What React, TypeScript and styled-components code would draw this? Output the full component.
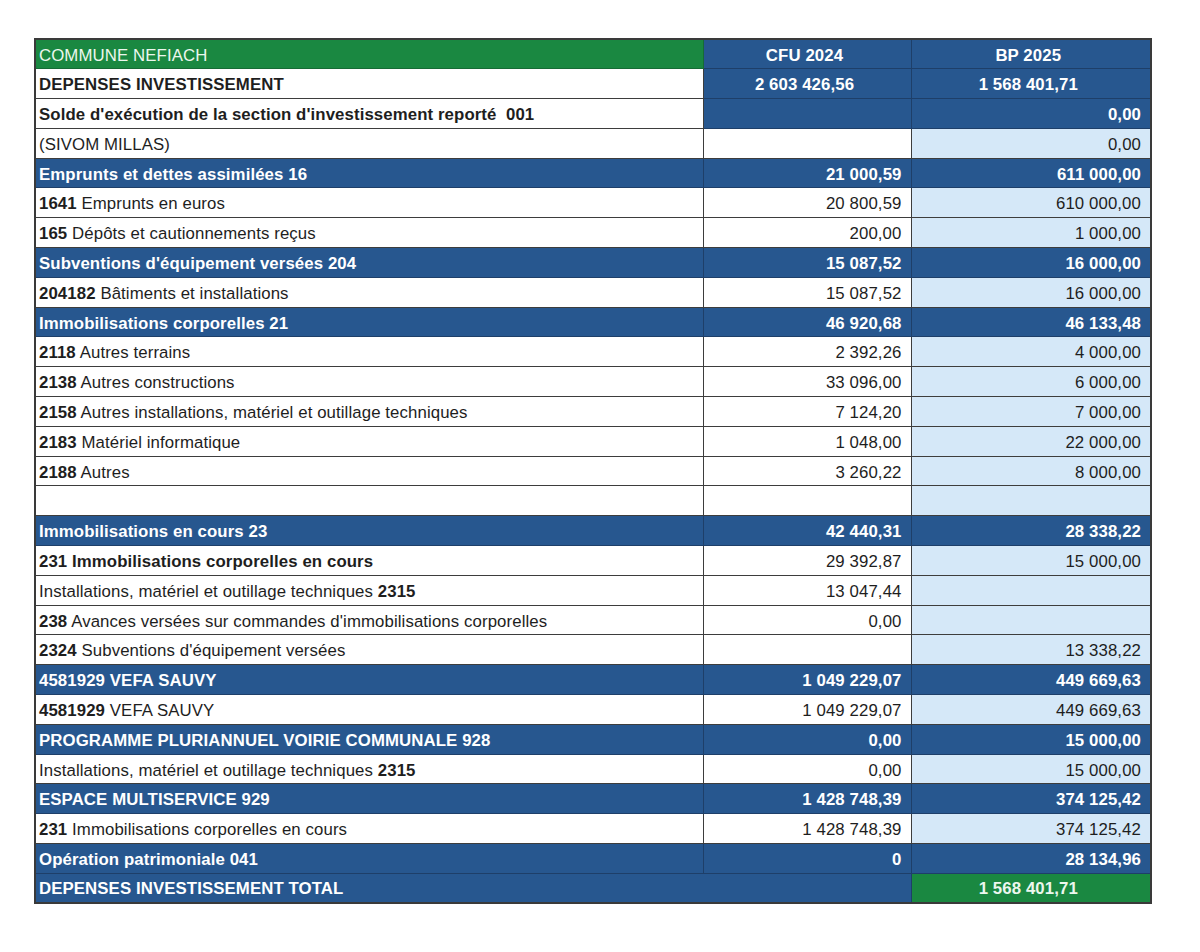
import React from "react";
import styled, { createGlobalStyle, css } from "styled-components";

const GlobalStyle = createGlobalStyle`
  html, body { margin: 0; padding: 0; background: #ffffff; }
  body { font-family: "Liberation Sans", Arial, sans-serif; }
`;

const BLUE = "#27578f";
const GREEN = "#1a8841";
const LIGHT = "#d5e8f8";

type Tone = "blue" | "green" | "white" | "light";

const Page = styled.div`
  padding: 38px 0 0 34px;
  width: 1200px;
  height: 952px;
  box-sizing: border-box;
`;

const Table = styled.table`
  border-collapse: collapse;
  table-layout: fixed;
  width: 1116px;
  border: 2px solid #3a3a3a;
  font-size: 16.8px;
  color: #1e1e1e;
`;

const Row = styled.tr`
  height: 29.8px;
`;

const toneStyles: Record<Tone, ReturnType<typeof css>> = {
  blue: css`
    background: ${BLUE};
    color: #ffffff;
    border-color: #1e3f69;
  `,
  green: css`
    background: ${GREEN};
    color: #ecf7ee;
    border-color: #166b35;
  `,
  white: css`
    background: #ffffff;
    color: #1e1e1e;
    border-color: #3d3d3d;
  `,
  light: css`
    background: ${LIGHT};
    color: #1e1e1e;
    border-color: #3d3d3d;
  `,
};

const Cell = styled.td<{ $tone: Tone; $align?: "left" | "right" | "center"; $bold?: boolean }>`
  ${(p) => toneStyles[p.$tone]}
  border-width: 1px;
  border-style: solid;
  padding: 3px 8px 0 3px;
  height: 29.8px;
  box-sizing: border-box;
  text-align: ${(p) => p.$align ?? "left"};
  font-weight: ${(p) => (p.$bold ? 700 : 400)};
  white-space: nowrap;
  overflow: hidden;
  line-height: 22px;
  vertical-align: middle;
  letter-spacing: 0.1px;
`;

const ValueCell = styled(Cell)`
  padding-right: 9px;
`;

const Code = styled.b`
  font-weight: 700;
`;

type Line =
  | { kind: "section"; label: string; cfu: string; bp: string }
  | { kind: "detail"; code?: string; text?: string; codeAfter?: boolean; allBold?: boolean; cfu: string; bp: string };

const lines: Line[] = [
  { kind: "section", label: "Emprunts et dettes assimilées 16", cfu: "21 000,59", bp: "611 000,00" },
  { kind: "detail", code: "1641", text: "Emprunts en euros", cfu: "20 800,59", bp: "610 000,00" },
  { kind: "detail", code: "165", text: "Dépôts et cautionnements reçus", cfu: "200,00", bp: "1 000,00" },
  { kind: "section", label: "Subventions d'équipement versées 204", cfu: "15 087,52", bp: "16 000,00" },
  { kind: "detail", code: "204182", text: "Bâtiments et installations", cfu: "15 087,52", bp: "16 000,00" },
  { kind: "section", label: "Immobilisations corporelles 21", cfu: "46 920,68", bp: "46 133,48" },
  { kind: "detail", code: "2118", text: "Autres terrains", cfu: "2 392,26", bp: "4 000,00" },
  { kind: "detail", code: "2138", text: "Autres constructions", cfu: "33 096,00", bp: "6 000,00" },
  { kind: "detail", code: "2158", text: "Autres installations, matériel et outillage techniques", cfu: "7 124,20", bp: "7 000,00" },
  { kind: "detail", code: "2183", text: "Matériel informatique", cfu: "1 048,00", bp: "22 000,00" },
  { kind: "detail", code: "2188", text: "Autres", cfu: "3 260,22", bp: "8 000,00" },
  { kind: "detail", cfu: "", bp: "" },
  { kind: "section", label: "Immobilisations en cours 23", cfu: "42 440,31", bp: "28 338,22" },
  { kind: "detail", code: "231", text: "Immobilisations corporelles en cours", allBold: true, cfu: "29 392,87", bp: "15 000,00" },
  { kind: "detail", code: "2315", text: "Installations, matériel et outillage techniques", codeAfter: true, cfu: "13 047,44", bp: "" },
  { kind: "detail", code: "238", text: "Avances versées sur commandes d'immobilisations corporelles", cfu: "0,00", bp: "" },
  { kind: "detail", code: "2324", text: "Subventions d'équipement versées", cfu: "", bp: "13 338,22" },
  { kind: "section", label: "4581929 VEFA SAUVY", cfu: "1 049 229,07", bp: "449 669,63" },
  { kind: "detail", code: "4581929", text: "VEFA SAUVY", cfu: "1 049 229,07", bp: "449 669,63" },
  { kind: "section", label: "PROGRAMME PLURIANNUEL VOIRIE COMMUNALE 928", cfu: "0,00", bp: "15 000,00" },
  { kind: "detail", code: "2315", text: "Installations, matériel et outillage techniques", codeAfter: true, cfu: "0,00", bp: "15 000,00" },
  { kind: "section", label: "ESPACE MULTISERVICE 929", cfu: "1 428 748,39", bp: "374 125,42" },
  { kind: "detail", code: "231", text: "Immobilisations corporelles en cours", cfu: "1 428 748,39", bp: "374 125,42" },
  { kind: "section", label: "Opération patrimoniale 041", cfu: "0", bp: "28 134,96" },
];

function DetailLabel({ line }: { line: Extract<Line, { kind: "detail" }> }) {
  if (!line.code) return null;
  if (line.allBold) return <>{`${line.code} ${line.text}`}</>;
  if (line.codeAfter)
    return (
      <>
        {line.text} <Code>{line.code}</Code>
      </>
    );
  return (
    <>
      <Code>{line.code}</Code> {line.text}
    </>
  );
}

export default function App() {
  return (
    <Page>
      <GlobalStyle />
      <Table>
        <colgroup>
          <col style={{ width: 668 }} />
          <col style={{ width: 208 }} />
          <col style={{ width: 240 }} />
        </colgroup>
        <tbody>
          <Row>
            <Cell $tone="green">COMMUNE NEFIACH</Cell>
            <Cell $tone="blue" $align="center" $bold>CFU 2024</Cell>
            <Cell $tone="blue" $align="center" $bold>BP 2025</Cell>
          </Row>
          <Row>
            <Cell $tone="white" $bold>DEPENSES INVESTISSEMENT</Cell>
            <Cell $tone="blue" $align="center" $bold>2 603 426,56</Cell>
            <Cell $tone="blue" $align="center" $bold>1 568 401,71</Cell>
          </Row>
          <Row>
            <Cell $tone="white" $bold>Solde d'exécution de la section d'investissement reporté&nbsp; 001</Cell>
            <Cell $tone="blue" />
            <ValueCell $tone="blue" $align="right" $bold>0,00</ValueCell>
          </Row>
          <Row>
            <Cell $tone="white">(SIVOM MILLAS)</Cell>
            <Cell $tone="white" />
            <ValueCell $tone="light" $align="right">0,00</ValueCell>
          </Row>
          {lines.map((line, i) =>
            line.kind === "section" ? (
              <Row key={i}>
                <Cell $tone="blue" $bold>{line.label}</Cell>
                <ValueCell $tone="blue" $align="right" $bold>{line.cfu}</ValueCell>
                <ValueCell $tone="blue" $align="right" $bold>{line.bp}</ValueCell>
              </Row>
            ) : (
              <Row key={i}>
                <Cell $tone="white" $bold={line.allBold}>
                  <DetailLabel line={line} />
                </Cell>
                <ValueCell $tone="white" $align="right">{line.cfu}</ValueCell>
                <ValueCell $tone="light" $align="right">{line.bp}</ValueCell>
              </Row>
            )
          )}
          <Row>
            <Cell $tone="blue" $bold colSpan={2}>DEPENSES INVESTISSEMENT TOTAL</Cell>
            <Cell $tone="green" $align="center" $bold>1 568 401,71</Cell>
          </Row>
        </tbody>
      </Table>
    </Page>
  );
}
